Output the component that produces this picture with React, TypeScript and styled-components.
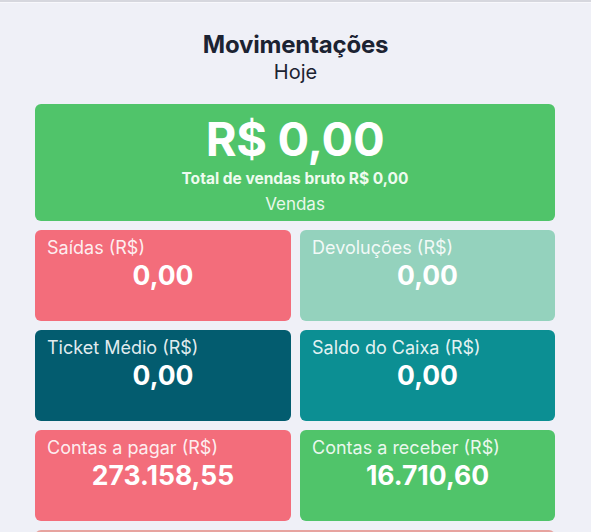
import React from "react";
import styled, { createGlobalStyle } from "styled-components";

const Global = createGlobalStyle`
  html, body { margin: 0; padding: 0; background: #eff0f7; }
  body { font-family: Inter, "Noto Sans", sans-serif; -webkit-font-smoothing: antialiased; }
`;

const Page = styled.div`
  border-top: 2px solid #d6d7de;
  height: 530px;
  background: #eff0f7;
  box-shadow: inset 0 1px 0 #f8f8fc;
  overflow: hidden;
`;

const Header = styled.header`
  display: flex;
  flex-direction: column;
  align-items: center;
  padding-top: 28px;
  padding-bottom: 20px;
`;

const Title = styled.h1`
  margin: 0;
  font-size: 24px;
  line-height: 30px;
  font-weight: 700;
  color: #1c2332;
  letter-spacing: -0.2px;
`;

const Subtitle = styled.div`
  font-size: 20px;
  line-height: 24px;
  color: #1c2332;
  font-weight: 400;
`;

const Cards = styled.div`
  display: flex;
  flex-direction: column;
  gap: 9px;
  padding: 0 36px 0 35px;
`;

const HeroCard = styled.div`
  height: 117px;
  background: #50c46a;
  border-radius: 6px;
  display: flex;
  flex-direction: column;
  align-items: center;
  color: #ffffff;
  padding-top: 7px;
  box-sizing: border-box;
`;

const HeroValue = styled.div`
  font-size: 47px;
  line-height: 56px;
  font-weight: 700;
  letter-spacing: -0.3px;
`;

const HeroSub = styled.div`
  font-size: 15.5px;
  line-height: 18px;
  margin-top: 3px;
  font-weight: 700;
  color: #eefbef;
`;

const HeroLabel = styled.div`
  font-size: 17px;
  line-height: 20px;
  margin-top: 6px;
  color: #e9f8ec;
`;

const Row = styled.div`
  display: grid;
  grid-template-columns: 256px 255px;
  gap: 9px;
`;

const Card = styled.div<{ $bg: string }>`
  height: 91px;
  background: ${(p) => p.$bg};
  border-radius: 6px;
  box-sizing: border-box;
  padding: 7px 12px;
  display: flex;
  flex-direction: column;
  color: #ffffff;
`;

const Label = styled.div`
  font-size: 18px;
  line-height: 22px;
  font-weight: 400;
  color: rgba(255, 255, 255, 0.9);
`;

const Value = styled.div`
  font-size: 26.5px;
  line-height: 32px;
  font-weight: 700;
  text-align: center;
`;

const Footer = styled.div`
  height: 40px;
  flex-shrink: 0;
  background: #e7a39f;
  border-radius: 6px;
`;

const cards: { label: string; value: string; bg: string }[][] = [
  [
    { label: "Saídas (R$)", value: "0,00", bg: "#f36d7b" },
    { label: "Devoluções (R$)", value: "0,00", bg: "#94d2bd" },
  ],
  [
    { label: "Ticket Médio (R$)", value: "0,00", bg: "#035c6f" },
    { label: "Saldo do Caixa (R$)", value: "0,00", bg: "#0c8f93" },
  ],
  [
    { label: "Contas a pagar (R$)", value: "273.158,55", bg: "#f36d7b" },
    { label: "Contas a receber (R$)", value: "16.710,60", bg: "#50c46a" },
  ],
];

export default function App() {
  return (
    <Page>
      <Global />
      <Header>
        <Title>Movimentações</Title>
        <Subtitle>Hoje</Subtitle>
      </Header>
      <Cards>
        <HeroCard>
          <HeroValue>R$ 0,00</HeroValue>
          <HeroSub>Total de vendas bruto R$ 0,00</HeroSub>
          <HeroLabel>Vendas</HeroLabel>
        </HeroCard>
        {cards.map((row, i) => (
          <Row key={i}>
            {row.map((c) => (
              <Card key={c.label} $bg={c.bg}>
                <Label>{c.label}</Label>
                <Value>{c.value}</Value>
              </Card>
            ))}
          </Row>
        ))}
        <Footer />
      </Cards>
    </Page>
  );
}
